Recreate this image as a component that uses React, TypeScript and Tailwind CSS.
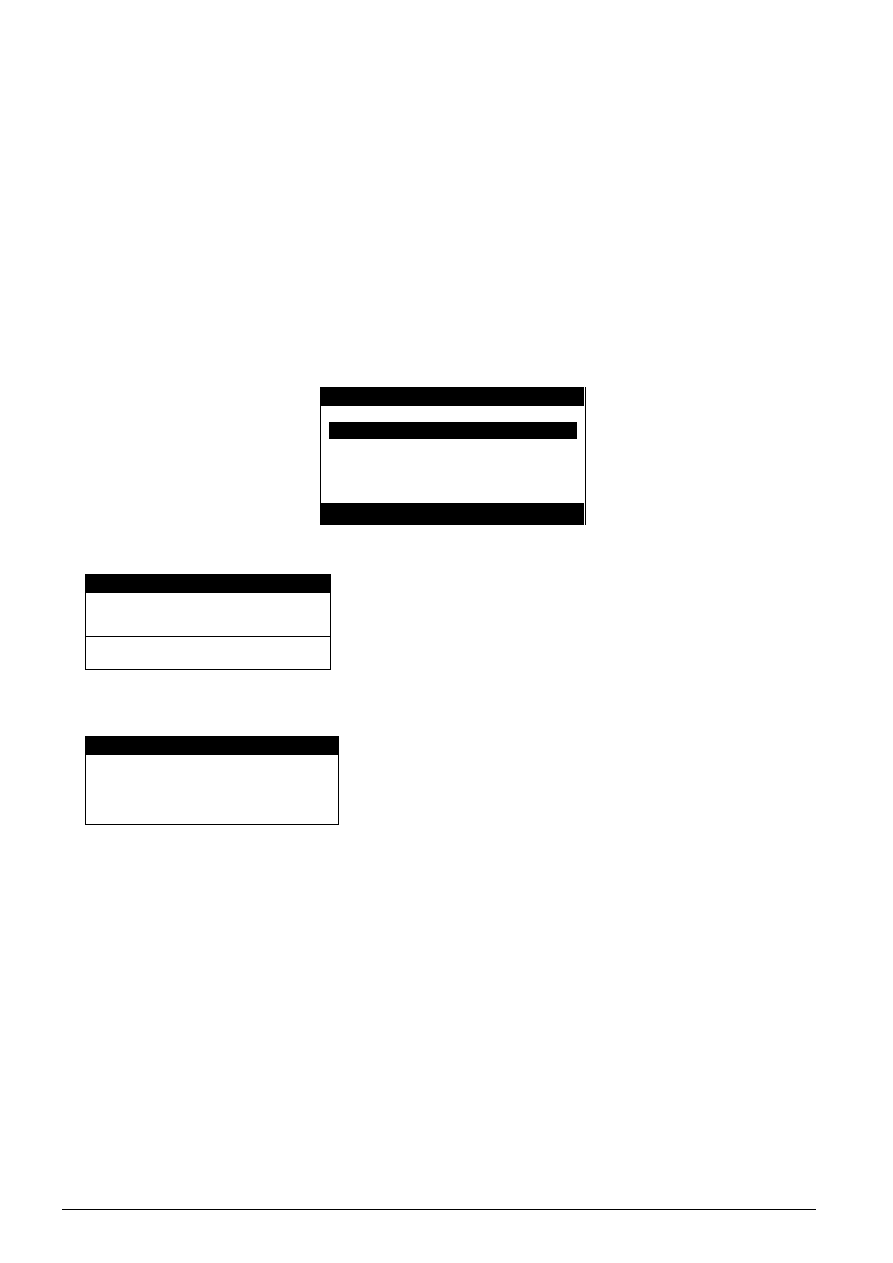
export default function App() {
  return (
    <div className="min-h-[1263px] w-[893px] bg-white font-['Liberation_Sans',sans-serif] flex flex-col">
      {/* Dialog */}
      <div className="ml-[320px] mt-[387px] w-[266px] h-[138px] border-x border-black flex flex-col">
        <div className="h-[19px] mr-px bg-black" />
        <div className="flex-1 px-2 pt-4">
          <div className="h-[17px] w-[248px] bg-black" />
        </div>
        <div className="h-[22px] mr-px bg-black" />
      </div>

      {/* Panel with footer */}
      <div className="ml-[85px] mt-[49px] w-[246px] h-[96px] border border-t-0 border-black flex flex-col">
        <div className="h-[19px] -ml-px bg-black" />
        <div className="h-[44px] border-b border-black" />
        <div className="flex-1" />
      </div>

      {/* Panel */}
      <div className="ml-[85px] mt-[66px] w-[254px] h-[89px] border border-t-0 border-black flex flex-col">
        <div className="h-[19px] -mx-px bg-black" />
        <div className="flex-1" />
      </div>

      <div className="ml-[62px] mt-[384px] w-[754px] h-px bg-black" />
    </div>
  );
}
